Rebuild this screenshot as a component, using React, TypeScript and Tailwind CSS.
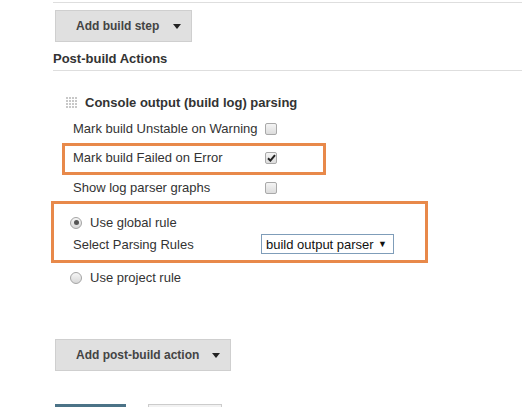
import React from 'react';

function Checkbox({ checked = false }: { checked?: boolean }) {
  return (
    <span className="flex h-[12px] w-[12px] items-center justify-center rounded-[2px] border border-[#a9a9a9] bg-gradient-to-b from-[#f4f4f4] to-[#dcdcdc]">
      {checked && (
        <svg width="9" height="8" viewBox="0 0 9 8">
          <path d="M1 4.2 L3.4 6.6 L8 1.2" fill="none" stroke="#222" strokeWidth="2" />
        </svg>
      )}
    </span>
  );
}

function Radio({ checked = false }: { checked?: boolean }) {
  return (
    <span className="flex h-[12px] w-[12px] items-center justify-center rounded-full border border-[#a4a4a4] bg-gradient-to-b from-[#f6f6f6] to-[#d8d8d8]">
      {checked && <span className="h-[5px] w-[5px] rounded-full bg-[#555]" />}
    </span>
  );
}

function Grip() {
  return (
    <div className="grid grid-cols-4 gap-[1px]">
      {Array.from({ length: 16 }).map((_, i) => (
        <span key={i} className="h-[2px] w-[2px] bg-[#c8c8c8]" />
      ))}
    </div>
  );
}

function DropButton({ label, width }: { label: string; width: string }) {
  return (
    <div
      className={`ml-[55px] flex h-[32px] items-center justify-between border border-[#cfcfcf] bg-[#e0e0e0] pl-[20px] pr-[10px] text-[12px] font-bold text-[#444] ${width}`}
    >
      <span>{label}</span>
      <svg width="8" height="5" viewBox="0 0 8 5">
        <path d="M0 0 H8 L4 5 Z" fill="#222" />
      </svg>
    </div>
  );
}

function OptionRow({ label, checked }: { label: string; checked?: boolean }) {
  return (
    <div className="flex items-center">
      <span className="w-[192px]">{label}</span>
      <Checkbox checked={checked} />
    </div>
  );
}

export default function App() {
  return (
    <div
      className="h-[407px] w-[522px] overflow-hidden bg-white text-[13px] leading-[15px] text-[#333]"
      style={{ fontFamily: '"Liberation Sans", Arial, sans-serif' }}
    >
      <div className="ml-[53px] mt-[2px] border-t border-[#dedede]" />
      <div className="mt-[7px]">
        <DropButton label="Add build step" width="w-[137px]" />
      </div>
      <div className="ml-[53px] mt-[9px] font-bold">Post-build Actions</div>
      <div className="ml-[53px] mt-[4px] border-t border-[#dedede]" />

      <div className="ml-[66px] mt-[24px] flex items-center gap-[8px] font-bold">
        <Grip />
        <span>Console output (build log) parsing</span>
      </div>

      <div className="ml-[73px] mt-[11px]">
        <OptionRow label="Mark build Unstable on Warning" />
      </div>

      <div className="ml-[62px] mt-[7px] w-[264px] border-[3px] border-[#e8894a] pb-[7px] pl-[8px] pt-[4px]">
        <OptionRow label="Mark build Failed on Error" checked />
      </div>

      <div className="ml-[73px] mt-[5px]">
        <OptionRow label="Show log parser graphs" />
      </div>

      <div className="ml-[51px] mt-[6px] w-[377px] border-[3px] border-[#e8894a] pb-[6px] pl-[16px] pt-[11px]">
        <div className="flex items-center gap-[8px]">
          <Radio checked />
          <span>Use global rule</span>
        </div>
        <div className="mt-[4px] flex items-center pl-[3px]">
          <span className="w-[188px]">Select Parsing Rules</span>
          <div className="flex h-[20px] w-[133px] items-center border border-[#7f9db9] bg-white pl-[4px] pr-[6px] text-[#111]">
            <span className="flex-1">build output parser</span>
            <span className="text-[9px]">▼</span>
          </div>
        </div>
      </div>

      <div className="ml-[70px] mt-[7px] flex items-center gap-[8px]">
        <Radio />
        <span>Use project rule</span>
      </div>

      <div className="mt-[54px]">
        <DropButton label="Add post-build action" width="w-[176px]" />
      </div>

      <div className="ml-[55px] mt-[33px] flex gap-[22px]">
        <div className="h-[10px] w-[71px] bg-[#4b7387]" />
        <div className="h-[10px] w-[74px] border border-[#ccc] bg-[#f2f2f2]" />
      </div>
    </div>
  );
}
